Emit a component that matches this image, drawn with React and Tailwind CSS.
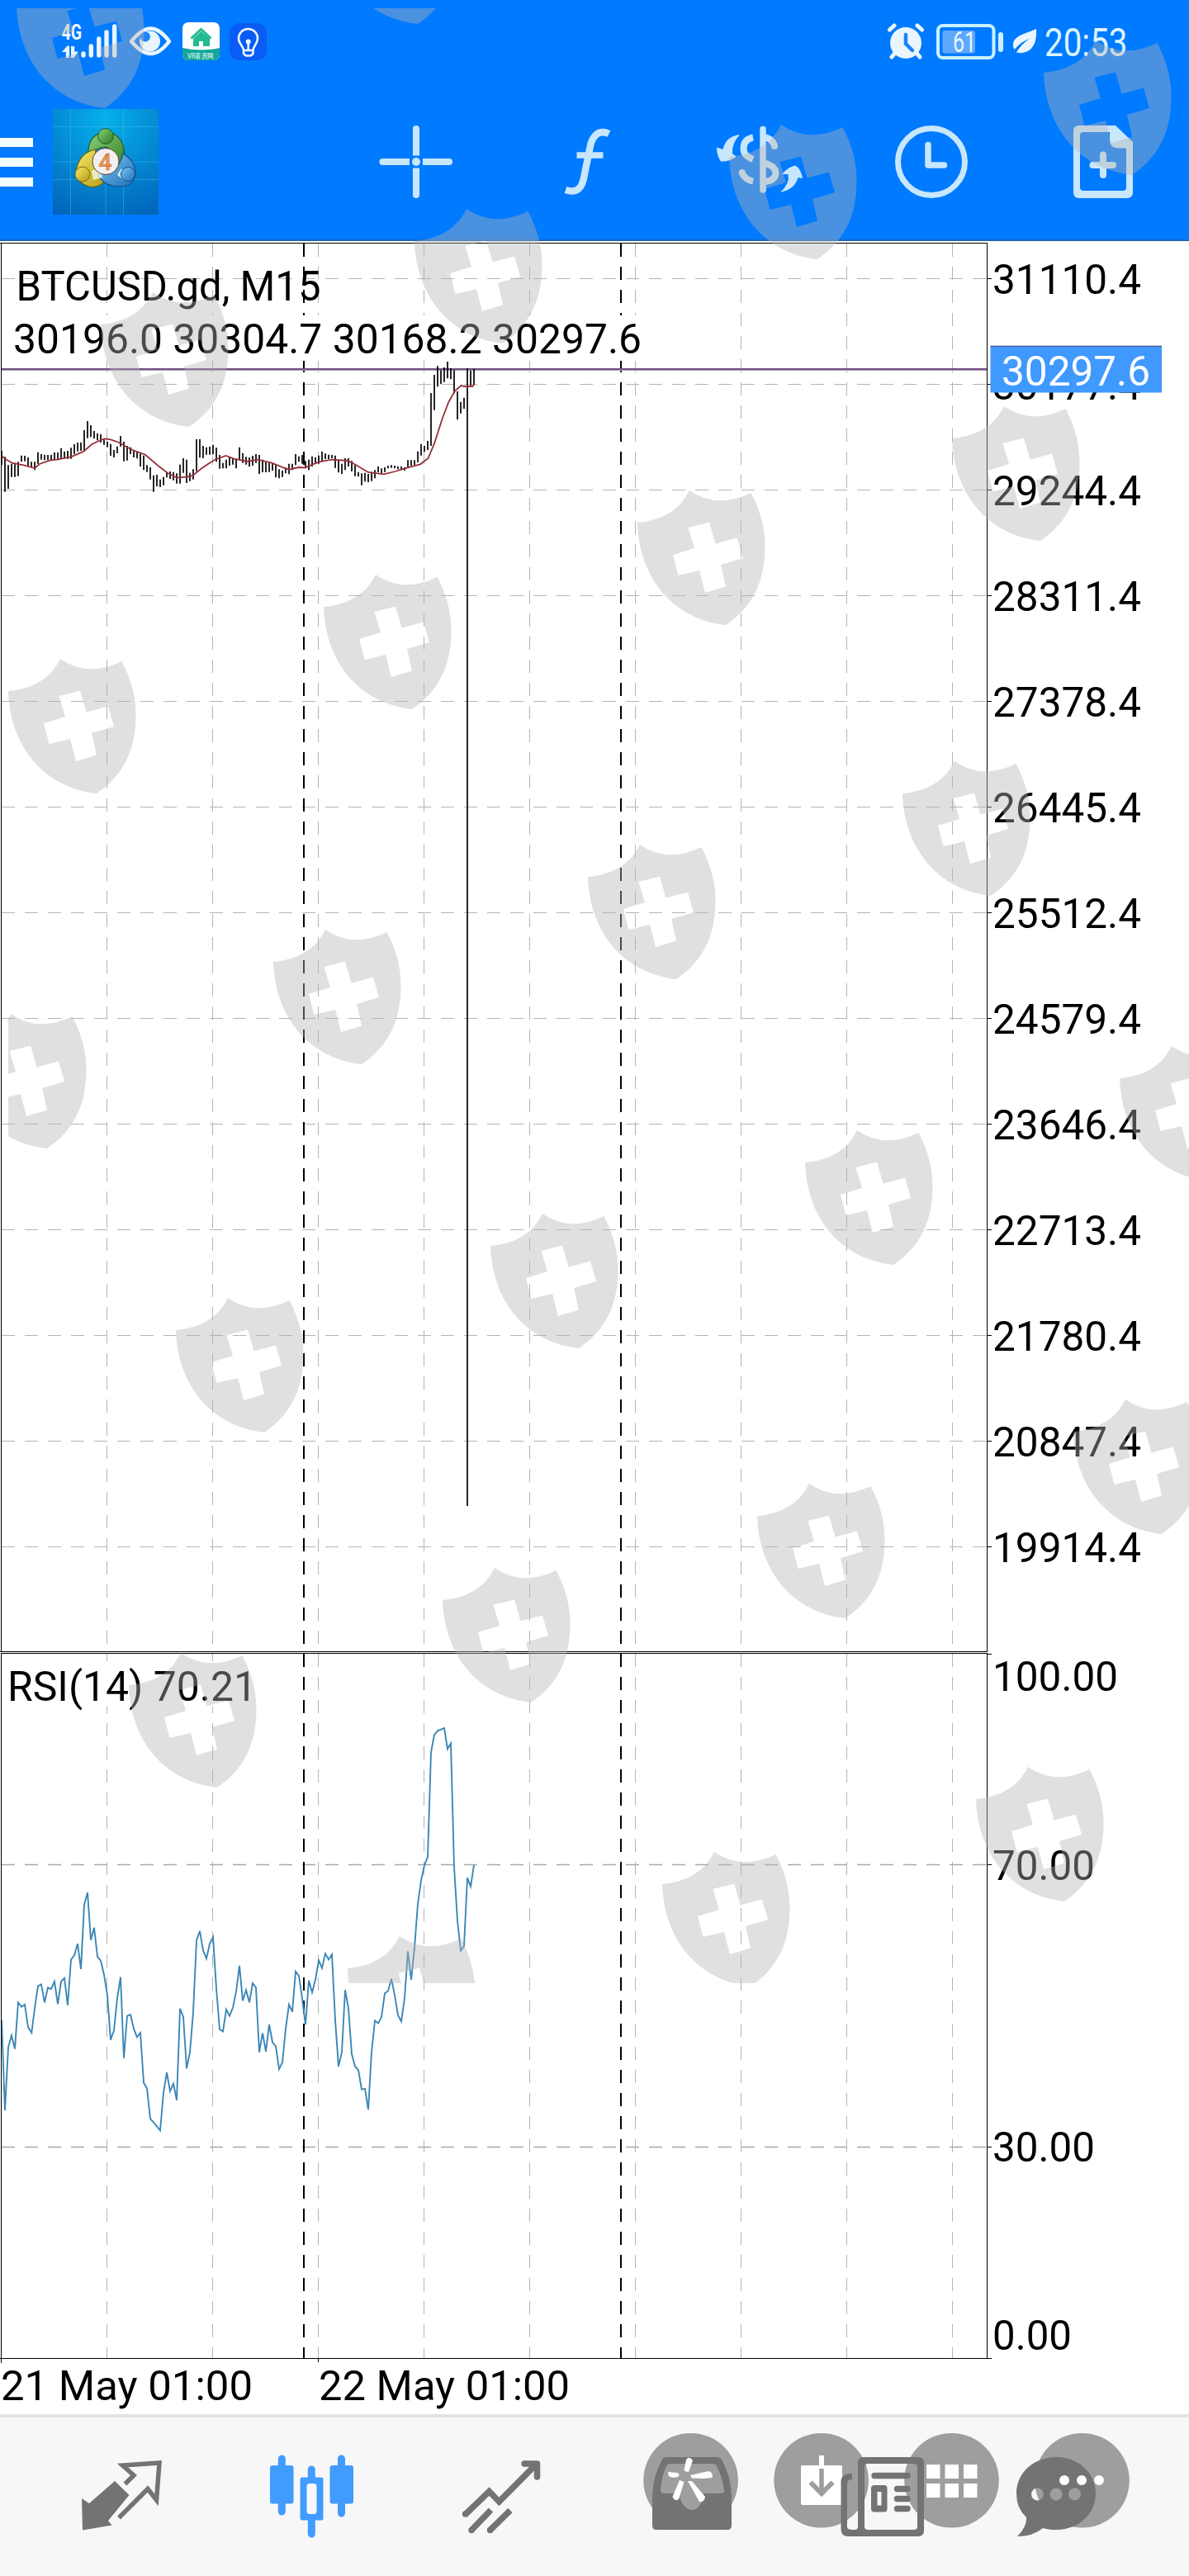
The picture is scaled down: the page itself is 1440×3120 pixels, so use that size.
import React from "react";

const FONT = '"Roboto", "Noto Sans", sans-serif';

/* high / low of every 15-minute bar, in tenths of a chart unit */
const BARS = [
  [768, 820], [790, 917], [820, 906], [815, 863], [812, 863], [808, 860], [785, 808], [786, 806], [792, 822], [808, 828],
  [808, 838], [773, 815], [780, 800], [782, 802], [783, 802], [783, 802], [774, 800], [774, 800], [758, 798], [770, 795],
  [768, 797], [757, 797], [744, 780], [738, 770], [738, 768], [693, 768], [660, 722], [675, 718], [696, 724], [705, 730],
  [708, 738], [722, 746], [735, 755], [743, 786], [765, 792], [752, 777], [714, 752], [735, 806], [750, 803], [755, 780],
  [765, 792], [770, 796], [778, 825], [785, 838], [820, 845], [828, 872], [857, 917], [855, 897], [872, 900], [863, 893],
  [845, 865], [843, 870], [845, 875], [850, 887], [818, 887], [795, 848], [800, 885], [848, 878], [835, 872], [726, 842],
  [726, 793], [750, 795], [755, 782], [753, 782], [746, 780], [757, 808], [783, 833], [812, 832], [800, 832], [792, 822],
  [795, 818], [798, 832], [755, 800], [776, 812], [790, 818], [792, 826], [786, 822], [780, 812], [783, 852], [800, 846],
  [810, 846], [812, 845], [812, 840], [820, 865], [835, 868], [840, 863], [830, 850], [815, 853], [815, 838], [780, 820],
  [788, 808], [783, 815], [805, 832], [800, 838], [788, 825], [792, 812], [785, 815], [770, 805], [778, 798], [782, 798],
  [783, 795], [785, 830], [802, 847], [815, 852], [795, 838], [795, 825], [805, 843], [820, 860], [845, 862], [850, 893],
  [848, 880], [852, 882], [845, 878], [838, 868], [825, 846], [832, 850], [828, 845], [822, 832], [820, 830], [822, 832],
  [825, 835], [825, 838], [828, 840], [802, 828], [802, 822], [802, 820], [770, 810], [743, 785], [750, 772], [732, 765],
  [558, 750], [492, 620], [460, 535], [475, 525], [465, 518], [444, 505], [468, 508], [475, 560], [552, 654], [590, 632],
  [575, 615], [468, 4602], [476, 530], [470, 528],
];

const AVERAGE = [
  [5, 787], [20, 800], [40, 813], [75, 820], [110, 831], [125, 816], [160, 802], [180, 800], [225, 790], [265, 770],
  [290, 745], [318, 729], [335, 724], [350, 727], [375, 737], [400, 754], [430, 770], [460, 782], [500, 822], [530, 848],
  [560, 866], [590, 863], [610, 858], [640, 830], [680, 800], [715, 786], [740, 797], [785, 807], [815, 800], [860, 812],
  [890, 826], [915, 836], [945, 828], [965, 829], [1010, 808], [1050, 800], [1100, 804], [1125, 818], [1165, 846],
  [1215, 853], [1250, 843], [1290, 829], [1330, 817], [1355, 795], [1375, 740], [1400, 650], [1420, 590], [1440, 550],
  [1460, 530], [1468, 534], [1495, 534], [1501, 526],
];

const RSI = [
  [6, 1095], [18, 1362], [30, 1175], [42, 1140], [54, 1180], [66, 1042], [78, 1055], [90, 1048], [102, 1115], [115, 1132],
  [126, 1060], [138, 993], [150, 988], [162, 1042], [174, 998], [186, 1002], [198, 980], [210, 1047], [222, 980],
  [234, 970], [246, 1050], [258, 915], [270, 902], [282, 868], [294, 943], [306, 752], [318, 716], [330, 857], [342, 820],
  [354, 906], [366, 918], [378, 960], [390, 1020], [402, 1153], [414, 1125], [426, 1030], [438, 967], [450, 1207],
  [462, 1082], [474, 1078], [486, 1120], [498, 1145], [510, 1132], [522, 1280], [534, 1297], [546, 1387], [558, 1398],
  [582, 1422], [594, 1310], [606, 1250], [618, 1305], [630, 1283], [642, 1332], [654, 1060], [666, 1085], [678, 1238],
  [690, 1190], [702, 1070], [714, 858], [726, 830], [738, 888], [750, 912], [762, 868], [774, 848], [786, 1000],
  [798, 1122], [810, 1128], [822, 1063], [834, 1082], [846, 1058], [858, 1010], [870, 933], [882, 1037], [894, 1005],
  [906, 1042], [918, 985], [930, 998], [942, 1190], [954, 1133], [966, 1188], [978, 1108], [990, 1160], [1002, 1172],
  [1014, 1240], [1026, 1220], [1038, 1120], [1050, 1048], [1062, 1070], [1074, 950], [1086, 963], [1098, 1030],
  [1110, 1108], [1122, 977], [1134, 1012], [1146, 975], [1158, 917], [1170, 940], [1182, 897], [1194, 915], [1206, 900],
  [1218, 1095], [1230, 1232], [1242, 1190], [1254, 1005], [1266, 1060], [1278, 1195], [1290, 1232], [1302, 1243],
  [1314, 1300], [1326, 1298], [1338, 1360], [1350, 1190], [1362, 1096], [1374, 1104], [1386, 1085], [1398, 1015],
  [1410, 1008], [1422, 972], [1434, 1020], [1446, 1080], [1458, 1098], [1470, 1030], [1482, 890], [1494, 975],
  [1506, 880], [1518, 750], [1530, 680], [1542, 635], [1554, 610], [1566, 300], [1578, 248], [1590, 236], [1614, 228],
  [1626, 290], [1638, 273], [1650, 640], [1662, 800], [1674, 888], [1686, 875], [1698, 672], [1710, 698], [1722, 634],
];

const PRICES = [
  "31110.4", "30177.4", "29244.4", "28311.4", "27378.4", "26445.4", "25512.4",
  "24579.4", "23646.4", "22713.4", "21780.4", "20847.4", "19914.4",
];

const SHIELDS = [
  [20, -32], [399, -134], [1264, 49], [883, 151], [502, 253], [122, 354],
  [1153, 492], [772, 594], [392, 696], [10, 798],
  [1093, 922], [712, 1023], [331, 1126], [-50, 1228],
  [1356, 1267], [975, 1369], [594, 1470], [213, 1572],
  [1300, 1695], [917, 1797], [536, 1899], [156, 2002],
  [1182, 2140], [802, 2243], [421, 2345],
];

const line = (pts) => pts.map((p) => p.map((v) => v.toFixed(1)).join(",")).join(" ");

function Label({ x, y, w, size = 50, fill = "#000", children }) {
  return (
    <text
      x={x}
      y={y}
      fontSize={size}
      fill={fill}
      fontFamily={FONT}
      textLength={w}
      lengthAdjust="spacingAndGlyphs"
      style={{ whiteSpace: "pre" }}
    >
      {children}
    </text>
  );
}

function Chart() {
  const cols = Array.from({ length: 9 }, (_, i) => 129.5 + i * 128);
  return (
    <svg className="block h-[2632px] w-full" viewBox="0 292 1440 2632">
      {/* grid */}
      <g stroke="#b4b4b4" strokeWidth="1" strokeDasharray="16 12">
        {cols.map((x) => (
          <g key={x}>
            <line x1={x} x2={x} y1="295" y2="2000" />
            <line x1={x} x2={x} y1="2003" y2="2856" />
          </g>
        ))}
        {PRICES.map((p, i) => (
          <line key={p} x1="2" x2="1195" y1={337.5 + i * 128} y2={337.5 + i * 128} />
        ))}
        <line x1="2" x2="1195" y1="2258.5" y2="2258.5" stroke="#a8a8a8" strokeWidth="1.4" />
        <line x1="2" x2="1195" y1="2600.5" y2="2600.5" stroke="#a8a8a8" strokeWidth="1.4" />
      </g>
      <g stroke="#000" strokeWidth="2" strokeDasharray="16 12">
        {[368, 752].map((x) => (
          <g key={x}>
            <line x1={x} x2={x} y1="295" y2="2000" />
            <line x1={x} x2={x} y1="2003" y2="2856" />
          </g>
        ))}
      </g>
      <rect x="3" y="382" width="779" height="55" fill="#fff" />
      <rect x="3" y="2012" width="310" height="55" fill="#fff" />

      {/* bid line */}
      <rect x="2" y="446" width="1194" height="2" fill="#74507f" />
      <rect x="2" y="448" width="1194" height="1" fill="#a7a0c4" />

      {/* price bars */}
      <path
        d={BARS.map(([h, l], i) => `M${2 + i * 4} ${(290 + h / 3).toFixed(1)}V${(290 + l / 3).toFixed(1)}`).join("")}
        stroke="#000"
        strokeWidth="1.7"
        fill="none"
      />
      <polyline points={line(AVERAGE.map(([x, y]) => [x / 2.613, 290 + y / 3]))} fill="none" stroke="#96303a" strokeWidth="1.8" />
      <polyline points={line(RSI.map(([x, y]) => [x / 3, 2000 + y / 2.45]))} fill="none" stroke="#3c86b6" strokeWidth="1.9" />

      {/* frames */}
      <g stroke="#000" strokeWidth="1" fill="none">
        <path d="M0 294.5H1196M1.5 294V2000M1195.5 294V2000M0 2000.5H1196M2 2002.5H1196M1.5 2002V2862M1195.5 2002V2856M0 2856.5H1196" />
        {PRICES.map((p, i) => (
          <line key={p} x1="1196" x2="1201" y1={337.5 + i * 128} y2={337.5 + i * 128} />
        ))}
        <path d="M1196 2003.5h5M1196 2258.5h5M1196 2600.5h5M1196 2856.5h5M385.5 2856v5" />
      </g>

      {/* value axis */}
      {PRICES.map((p, i) => (
        <Label key={p} x={1202} y={355.5 + i * 128} w={180}>
          {p}
        </Label>
      ))}
      <Label x={1202} y={2048} w={152}>100.00</Label>
      <Label x={1202} y={2277} w={124}>70.00</Label>
      <Label x={1202} y={2618} w={124}>30.00</Label>
      <Label x={1202} y={2846} w={96}>0.00</Label>
      <rect x="1199.5" y="419" width="207.5" height="56.5" fill="#3f99ff" />
      <rect x="1199.5" y="418.7" width="207.5" height="1.2" fill="#4a4f8c" />
      <Label x={1213} y={466.5} w={180} fill="#fff">30297.6</Label>

      {/* captions */}
      <Label x={19.5} y={364} w={369}>BTCUSD.gd, M15</Label>
      <Label x={16} y={428} w={761}>30196.0 30304.7 30168.2 30297.6</Label>
      <Label x={9} y={2059.5} w={302}>RSI(14) 70.21</Label>
      <Label x={1} y={2907} w={305}>21 May 01:00</Label>
      <Label x={386} y={2907} w={304}>22 May 01:00</Label>
    </svg>
  );
}

function StatusBar() {
  const ink = "#eaf6fd";
  return (
    <div className="flex h-[100px] items-center pl-[74px]">
      <svg className="h-[50px] w-[70px]" viewBox="74 25 70 50">
        <Label x={74.5} y={48} w={24.5} size={26} fill="#f0f8fd">
          <tspan fontWeight="700">4G</tspan>
        </Label>
        <g stroke={ink} strokeLinecap="round" strokeWidth="5.4" fill="none">
          <path d="M101 65v2M110.3 56v11M119.8 47v20M129 39v28M138.7 32v35" />
        </g>
        <path d="M75 63l6.5-7.5h2.5V70h-4.200V63zM95 62.500L89.500 70H86V56h4.200v6.500z" fill={ink} />
      </svg>
      <svg className="ml-[11px] h-[38px] w-[54px]" viewBox="155 31 54 38">
        <path d="M159 50C169 38 176 34.500 182.500 34.500S196 38 205 50C196 62 189 65 182.500 65S169 62 159 50Z" fill="none" stroke={ink} strokeWidth="4.500" strokeLinejoin="round" />
        <circle cx="181.500" cy="50" r="12.500" fill={ink} />
        <circle cx="176" cy="44.500" r="6" fill="#1c86fb" />
      </svg>
      <svg className="ml-[12px] h-[46px] w-[46px]" viewBox="221 27 46 46">
        <clipPath id="vr"><rect x="221" y="27" width="45" height="46" rx="7" /></clipPath>
        <g clipPath="url(#vr)">
          <rect x="221" y="27" width="45" height="46" fill="#fff" />
          <path d="M221 58Q243 63 266 58V73H221Z" fill="#12a59a" />
          <path d="M231.500 46.500L243.500 35.500L255.500 46.500" stroke="#24bb90" strokeWidth="3" fill="none" />
          <path d="M234 46.500L243.500 38L254 46.500V56H246V50h-5v6H234Z" fill="#24bb90" />
          <Label x={227} y={70.5} w={32} size={9} fill="#e6fffa">VR看房网</Label>
        </g>
      </svg>
      <svg className="ml-[11px] h-[46px] w-[46px]" viewBox="278 27 46 46">
        <rect x="278" y="28" width="45" height="45" rx="12" fill="#0a5cf5" />
        <g stroke={ink} strokeWidth="2.600" fill="none" strokeLinejoin="round" strokeLinecap="round">
          <path d="M295 61C295 56 289 53.500 289 46.500a11.500 11.500 0 0 1 23 0C312 53.500 306.500 56 306.500 61ZM295 61v4l3 2.500h5.500l3-2.500V61M300.700 53v7" />
        </g>
        <circle cx="300.700" cy="50.500" r="3" fill={ink} />
      </svg>
      <svg className="ml-[750px] h-[46px] w-[46px]" viewBox="1074 26 46 46">
        <circle cx="1097" cy="51" r="19" fill={ink} />
        <path d="M1077.500 35l5.500-5M1116.500 35l-5.500-5M1084 63l-4 5M1110 63l4 5" stroke={ink} strokeWidth="5" strokeLinecap="round" />
        <path d="M1097 41v11l8 8" stroke="#1784fb" strokeWidth="4.500" strokeLinecap="round" fill="none" />
      </svg>
      <svg className="ml-[13px] h-[46px] w-[84px]" viewBox="1133 27 84 46">
        <rect x="1136" y="31" width="67.500" height="39" rx="6" fill="none" stroke="#c9f1ff" strokeWidth="4" />
        <rect x="1141.500" y="37" width="39.500" height="27.500" rx="3" fill="#5ea8fb" />
        <rect x="1209" y="39" width="6" height="24" rx="3" fill="#c9f1ff" />
        <Label x={1154} y={63} w={28} size={35} fill="#e2f7ff">61</Label>
      </svg>
      <svg className="ml-[8px] h-[34px] w-[32px]" viewBox="1225 33 32 34">
        <path d="M1255 35C1243 41 1229 42 1227 53Q1226.500 57 1228.500 60Q1237 50 1247 47Q1237 53 1231 63.500Q1239 66 1246.500 61C1254.500 55 1255.500 45 1255 35Z" fill={ink} />
      </svg>
      <svg className="ml-[8px] h-[50px] w-[102px]" viewBox="1265 27 102 50">
        <Label x={1265} y={69.5} w={100.500} size={48} fill="#dcf5ff">20:53</Label>
      </svg>
    </div>
  );
}

function TradeLogo() {
  return (
    <svg className="ml-[24px] h-[128px] w-[128px]" viewBox="64 132 128 128">
      <defs>
        <radialGradient id="sky" cx="0.5" cy="0.1" r="0.95">
          <stop offset="0" stopColor="#06b0ea" />
          <stop offset="0.55" stopColor="#0488d2" />
          <stop offset="1" stopColor="#0267bc" />
        </radialGradient>
        <linearGradient id="gr" x2="1" y2="1"><stop offset="0" stopColor="#8bd07a" /><stop offset="1" stopColor="#2b7d22" /></linearGradient>
        <linearGradient id="ye" x2="1" y2="1"><stop offset="0" stopColor="#f3ea6a" /><stop offset="1" stopColor="#b79a12" /></linearGradient>
        <linearGradient id="bl" x2="1" y2="1"><stop offset="0" stopColor="#7cc8f5" /><stop offset="1" stopColor="#1d6fb8" /></linearGradient>
      </defs>
      <rect x="64" y="132" width="128" height="128" fill="url(#sky)" />
      <path d="M85.500 132V260M128 132V260M149.500 132V260M64 153.500H192M64 196H192M64 217.500H192" stroke="#4cc3ea" strokeOpacity=".4" />
      <path d="M107 190Q105 168 121 161H136Q153 170 150 192L140 208Q140 180 128 178Q116 178 107 190Z" fill="url(#gr)" stroke="#1f5a24" strokeWidth="1.200" />
      <path d="M116 181Q98 184 93 203Q88 219 108 226Q122 229 131 214Q112 209 116 181Z" fill="url(#ye)" stroke="#6e5d12" strokeWidth="1.200" />
      <path d="M149 186Q165 196 164 211Q162 226 145 226Q126 226 118 211Q144 210 149 186Z" fill="url(#bl)" stroke="#134f86" strokeWidth="1.200" />
      <path d="M111 207l10-4 3 12-11 3ZM146 205l8-1-4 14-8-6Z" fill="#f4f8e8" opacity=".8" />
      <circle cx="128" cy="165" r="9.300" fill="url(#gr)" stroke="#1f5a24" />
      <circle cx="100" cy="211" r="9" fill="url(#ye)" stroke="#7d6a17" />
      <circle cx="155" cy="211" r="8.500" fill="url(#bl)" stroke="#134f86" />
      <circle cx="128" cy="195.500" r="16" fill="#f3eff4" stroke="#5a4a30" strokeWidth="1" />
      <text x="127.500" y="205.500" fontSize="28" fontWeight="500" textAnchor="middle" fontFamily={FONT} fill="#ee9a55" stroke="#c9702c" strokeWidth=".6">4</text>
    </svg>
  );
}

function Toolbar() {
  const ink = "#c8e7fc";
  return (
    <div className="flex h-[192px] items-center">
      <svg className="h-[60px] w-[40px]" viewBox="0 168 40 60">
        <path d="M0 169H40V180H0ZM0 193H40V204H0ZM0 217H40V228H0Z" fill="#f3fffe" />
      </svg>
      <TradeLogo />
      <svg className="ml-[266px] h-[92px] w-[92px]" viewBox="458 150 92 92">
        <path d="M504 156v28M504 208v28M463.500 196h28M516 196h28" stroke={ink} strokeWidth="8" strokeLinecap="round" />
        <path d="M504 176v12.500M504 203.500v10M484 196h12M512 196h12" stroke={ink} strokeWidth="8" />
        <circle cx="504" cy="196" r="5" fill={ink} />
      </svg>
      <svg className="ml-[132px] h-[92px] w-[62px]" viewBox="682 150 62 92">
        <path d="M737.500 162Q722 155 715.500 174L706.500 218Q702 236 685 230" fill="none" stroke={ink} strokeWidth="8.500" />
        <path d="M698.500 188H730.500" stroke={ink} strokeWidth="7.500" />
      </svg>
      <svg className="ml-[121px] h-[92px] w-[110px]" viewBox="865 150 110 92">
        <path d="M912 166.500C904 168 900.500 173 900.500 180C900.500 187 905 190 912 193M912 219.500C906 218.500 901 215 898.500 209M924.500 166Q934.500 167 938 176M924.500 197C934 200 939.500 203 939.500 210C939.500 216 934 219.500 924.500 220" fill="none" stroke={ink} strokeWidth="8" strokeLinecap="butt" />
        <circle cx="938" cy="177" r="4" fill={ink} />
        <circle cx="898.800" cy="209" r="4" fill={ink} />
        <path d="M924 156.500V230" stroke={ink} strokeWidth="7.500" strokeLinecap="round" />
        <path d="M896 163Q879 165 875.500 181L868 178.500Q868 188 873 195.500Q883 196 892 190L887 186Q886 174 896 163Z" fill={ink} />
        <path d="M945 233Q957 222 954.500 211L947 211Q953 203 963 200.500Q970 204 972 216L966.500 215Q963 229 945 233Z" fill={ink} />
      </svg>
      <svg className="ml-[107px] h-[92px] w-[92px]" viewBox="1082 150 92 92">
        <circle cx="1128" cy="196" r="40.500" fill="none" stroke={ink} strokeWidth="7" />
        <path d="M1124 175.500V200H1143.500" fill="none" stroke={ink} strokeWidth="7.500" strokeLinecap="round" strokeLinejoin="round" />
      </svg>
      <svg className="ml-[124px] h-[92px] w-[76px]" viewBox="1298 150 76 92">
        <path fillRule="evenodd" d="M1307 152H1351L1372 172V233Q1372 240 1365 240H1307Q1300 240 1300 233V159Q1300 152 1307 152ZM1312 160Q1308 160 1308 164V227Q1308 231 1312 231H1360Q1364 231 1364 227V179.500H1354Q1344 179 1344 170V160Z" fill={ink} />
        <path d="M1336 187.500V212M1323.500 200H1348" stroke={ink} strokeWidth="8" strokeLinecap="round" />
      </svg>
    </div>
  );
}

function BottomBar() {
  const g = "#737373";
  const discs = [836.6, 994.6, 1152.5, 1310.5];
  return (
    <nav className="relative flex h-[196px] items-center border-t-4 border-[#e3e3e3] bg-[#f7f7f7]">
      <svg className="absolute inset-0 h-full w-full" viewBox="0 2928 1440 192">
        {discs.map((x) => (
          <circle key={x} cx={x} cy="3004.300" r="57.300" fill="#9e9e9e" />
        ))}
        <rect x="970" y="2986" width="50" height="48" rx="2" fill="#fff" />
        <path d="M995 2990v28" stroke="#9e9e9e" strokeWidth="5.500" />
        <path d="M995 2974v14" stroke="#fff" strokeWidth="6" />
        <path d="M981.500 3006.500L995 3020L1008.500 3006.500" stroke="#9e9e9e" strokeWidth="6" fill="none" />
      </svg>

      <svg className="relative ml-[97px] h-[100px] w-[100px]" viewBox="97 2974 100 100">
        <path d="M139 3005L156.500 3022L131 3053L135.500 3058.500L100 3064.500L99 3026L108 3032Z" fill={g} />
        <path d="M151.500 3008.500L162 2998L148.500 2986L193 2983L189.500 3028L179 3014.500L144 3049.500" fill="none" stroke={g} strokeWidth="5.500" />
      </svg>
      <svg className="relative ml-[129px] h-[104px] w-[104px]" viewBox="325 2970 104 104">
        <g fill="#429cff">
          <rect x="326" y="2984" width="28.500" height="46.500" rx="3" />
          <rect x="398.500" y="2984" width="28.500" height="46.500" rx="3" />
          <path fillRule="evenodd" d="M365 2998.500H388Q390.500 2998.500 390.500 3001V3048Q390.500 3050.500 388 3050.500H365Q362.500 3050.500 362.500 3048V3001Q362.500 2998.500 365 2998.500ZM374 3006Q370.500 3006 370.500 3010V3039Q370.500 3043 374 3043H379Q382.500 3043 382.500 3039V3010Q382.500 3006 379 3006Z" />
        </g>
        <path d="M340.300 2976v64M412.500 2976v66M376.300 2989v10M376.300 3049v18" stroke="#429cff" strokeWidth="9" strokeLinecap="round" />
      </svg>
      <svg className="relative ml-[128px] h-[100px] w-[100px]" viewBox="557 2970 100 100">
        <g fill="none" stroke={g} strokeWidth="7.500">
          <path d="M562 3042L591.500 3013.500L603.500 3026L649 2980" />
          <path d="M634 2980H649.500V2996M569.500 3061L593.500 3036M592 3061L617 3036.500" strokeLinejoin="round" />
        </g>
        <g fill={g}>
          <circle cx="562.500" cy="3041" r="3.700" /><circle cx="570" cy="3060.500" r="3.700" /><circle cx="592.500" cy="3060.500" r="3.700" />
          <circle cx="634" cy="2980" r="3.700" /><circle cx="649.500" cy="2996" r="3.700" />
        </g>
      </svg>
      <svg className="relative ml-[130px] h-[100px] w-[100px]" viewBox="787 2974 100 100">
        <path fillRule="evenodd" d="M805 2976H866Q872 2976 874 2981Q884 2999 885 3023V3059Q885 3064 880 3064H794Q789 3064 789 3059V3023Q790 2999 800 2981Q802 2976 805 2976ZM811 2984Q807 2984 806 2987Q800 3000 799 3016Q799 3020 803 3020H822C822 3030 829 3040 837 3040S851 3030 851 3020H872Q877 3020 876 3015Q873 2998 867 2987Q866 2984 861 2984Z" fill={g} />
      </svg>
      <svg className="relative ml-[129px] h-[100px] w-[104px]" viewBox="1016 2970 104 100">
        <path fillRule="evenodd" d="M1045 2972H1111Q1118 2972 1118 2979V3061Q1118 3068 1111 3068H1026Q1017.500 3068 1017.500 3059V3001Q1018 2992 1031 2992V2999Q1026 2999 1025 3003V3057Q1026 3060 1031 3060H1034Q1038 3060 1038 3056V2979Q1038 2972 1045 2972ZM1050 2980Q1046 2980 1046 2984V3056Q1046 3060 1050 3060H1106Q1110 3060 1110 3056V2984Q1110 2980 1106 2980ZM1058 3006H1070Q1073.500 3006 1073.500 3010V3034Q1073.500 3038.500 1070 3038.500H1058Q1054 3038.500 1054 3034V3010Q1054 3006 1058 3006ZM1061.500 3014V3030.500H1066.500V3014Z" fill={g} />
        <path d="M1058 2994.500H1098M1085.500 3010.500H1098M1085.500 3022.500H1098M1085.500 3034.500H1098" stroke={g} strokeWidth="7.500" strokeLinecap="round" />
      </svg>
      <svg className="relative ml-[108px] h-[100px] w-[100px]" viewBox="1228 2970 100 100">
        <path fillRule="evenodd" d="M1278 2972C1305 2972 1326 2991 1326 3016S1305 3060 1278 3060Q1269 3060 1262 3058Q1250 3068 1231 3068Q1243 3056 1242 3045Q1230 3034 1230 3016C1230 2991 1251 2972 1278 2972ZM1248 3017a7.500 7.500 0 1 0 15 0a7.500 7.500 0 1 0-15 0ZM1270.500 3017a7.500 7.500 0 1 0 15 0a7.500 7.500 0 1 0-15 0ZM1293 3017a7.500 7.500 0 1 0 15 0a7.500 7.500 0 1 0-15 0Z" fill={g} />
      </svg>

      <svg className="absolute inset-0 h-full w-full" viewBox="0 2928 1440 192">
        <g fill="#fff">
          {[1122, 1144.500, 1167].map((x) => (
            <g key={x}>
              <rect x={x} y="2985" width="16.500" height="17" />
              <rect x={x} y="3008" width="16.500" height="17" />
            </g>
          ))}
          {[1289, 1310, 1331].map((x) => (
            <circle key={x} cx={x} cy="3004" r="6" />
          ))}
          <path d="M831 2979Q835 2974 839 2980L834 2994Q830 2994 828.500 2992Z" />
          <path d="M836 2998L858 2993Q864 2994 862.500 3001L852 3002L838 3001.500Z" />
          <path d="M833 3005L838 3005L854 3024Q853 3031 847 3030Z" />
          <path d="M823 3004L828.500 3006L822 3027Q817 3030 814.500 3024Z" />
          <path d="M809 2994L821 2995Q824 2998 821 3000Q812 3002 809.500 2998Z" />
        </g>
      </svg>
    </nav>
  );
}

function Watermark() {
  return (
    <svg className="pointer-events-none absolute left-0 top-0 h-[3120px] w-[1440px]" viewBox="0 0 1440 3120">
      <defs>
        <clipPath id="area"><rect x="10" y="10" width="1430" height="2392" /></clipPath>
        <path
          id="shield"
          fillRule="evenodd"
          d="M0 39Q46 35 63 0Q96 23 137.500 3Q154 34 154.500 66C155 112 138 142 107 163C43 156 2 106 0 39ZM61.500 45L69 70L43 78L49.500 103L75 97L82 124L107 116.500L101 90L128 82L121 57.500L94.500 64.500L87 38.500Z"
        />
      </defs>
      <g clipPath="url(#area)" fill="#b3b3b3" fillOpacity="0.41">
        {SHIELDS.map(([x, y]) => (
          <use key={`${x}/${y}`} href="#shield" x={x} y={y} />
        ))}
      </g>
    </svg>
  );
}

export default function App() {
  return (
    <div className="relative flex h-[3120px] w-[1440px] flex-col overflow-hidden bg-white">
      <header className="h-[292px] bg-[#007aff] shadow-[inset_0_-2px_0_#1b66bd]">
        <StatusBar />
        <Toolbar />
      </header>
      <main className="h-[2632px]">
        <Chart />
      </main>
      <BottomBar />
      <Watermark />
    </div>
  );
}
